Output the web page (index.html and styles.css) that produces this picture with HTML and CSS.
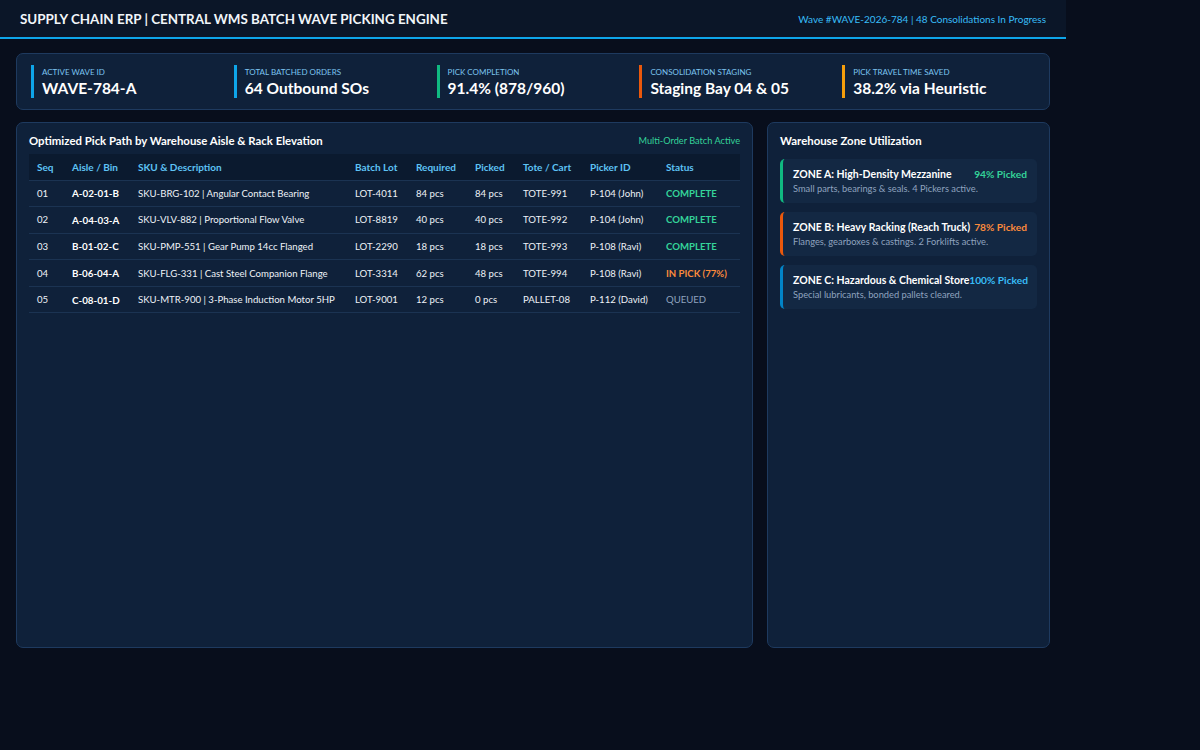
FILE: index.html
```html
<!DOCTYPE html>
<html lang="en">
<head>
  <meta charset="UTF-8">
  <meta name="viewport" content="width=device-width, initial-scale=1.0">
  <title>Central WMS Batch Wave Picking Engine</title>
  <link rel="stylesheet" href="styles.css">
</head>
<body>
  <div class="app">
    <header class="top-bar">
      <h1 class="app-title">Supply Chain ERP | Central WMS Batch Wave Picking Engine</h1>
      <div class="wave-meta">Wave #WAVE-2026-784 | 48 Consolidations In Progress</div>
    </header>

    <main class="content">
      <section class="stats-card">
        <div class="stat stat-blue">
          <span class="stat-label">Active Wave ID</span>
          <span class="stat-value">WAVE-784-A</span>
        </div>
        <div class="stat stat-blue">
          <span class="stat-label">Total Batched Orders</span>
          <span class="stat-value">64 Outbound SOs</span>
        </div>
        <div class="stat stat-green">
          <span class="stat-label">Pick Completion</span>
          <span class="stat-value">91.4% (878/960)</span>
        </div>
        <div class="stat stat-orange">
          <span class="stat-label">Consolidation Staging</span>
          <span class="stat-value">Staging Bay 04 &amp; 05</span>
        </div>
        <div class="stat stat-amber">
          <span class="stat-label">Pick Travel Time Saved</span>
          <span class="stat-value">38.2% via Heuristic</span>
        </div>
      </section>

      <div class="main-grid">
        <section class="panel">
          <div class="panel-header">
            <h2 class="panel-title">Optimized Pick Path by Warehouse Aisle &amp; Rack Elevation</h2>
            <span class="panel-tag">Multi-Order Batch Active</span>
          </div>
          <table class="pick-table">
            <colgroup>
              <col class="c-seq"><col class="c-aisle"><col class="c-sku"><col class="c-lot"><col class="c-req">
              <col class="c-picked"><col class="c-tote"><col class="c-picker"><col class="c-status">
            </colgroup>
            <thead>
              <tr>
                <th>Seq</th><th>Aisle / Bin</th><th>SKU &amp; Description</th><th>Batch Lot</th><th>Required</th>
                <th>Picked</th><th>Tote / Cart</th><th>Picker ID</th><th>Status</th>
              </tr>
            </thead>
            <tbody>
              <tr>
                <td>01</td><td class="bin">A-02-01-B</td><td>SKU-BRG-102 | Angular Contact Bearing</td><td>LOT-4011</td>
                <td>84 pcs</td><td>84 pcs</td><td>TOTE-991</td><td>P-104 (John)</td><td class="status done">COMPLETE</td>
              </tr>
              <tr>
                <td>02</td><td class="bin">A-04-03-A</td><td>SKU-VLV-882 | Proportional Flow Valve</td><td>LOT-8819</td>
                <td>40 pcs</td><td>40 pcs</td><td>TOTE-992</td><td>P-104 (John)</td><td class="status done">COMPLETE</td>
              </tr>
              <tr>
                <td>03</td><td class="bin">B-01-02-C</td><td>SKU-PMP-551 | Gear Pump 14cc Flanged</td><td>LOT-2290</td>
                <td>18 pcs</td><td>18 pcs</td><td>TOTE-993</td><td>P-108 (Ravi)</td><td class="status done">COMPLETE</td>
              </tr>
              <tr>
                <td>04</td><td class="bin">B-06-04-A</td><td>SKU-FLG-331 | Cast Steel Companion Flange</td><td>LOT-3314</td>
                <td>62 pcs</td><td>48 pcs</td><td>TOTE-994</td><td>P-108 (Ravi)</td><td class="status active">IN PICK (77%)</td>
              </tr>
              <tr>
                <td>05</td><td class="bin">C-08-01-D</td><td>SKU-MTR-900 | 3-Phase Induction Motor 5HP</td><td>LOT-9001</td>
                <td>12 pcs</td><td>0 pcs</td><td>PALLET-08</td><td>P-112 (David)</td><td class="status queued">QUEUED</td>
              </tr>
            </tbody>
          </table>
        </section>

        <aside class="panel">
          <div class="panel-header">
            <h2 class="panel-title">Warehouse Zone Utilization</h2>
          </div>
          <div class="zone-list">
            <div class="zone zone-green">
              <div class="zone-top">
                <span class="zone-name">ZONE A: High-Density Mezzanine</span>
                <span class="zone-pct">94% Picked</span>
              </div>
              <p class="zone-desc">Small parts, bearings &amp; seals. 4 Pickers active.</p>
            </div>
            <div class="zone zone-orange">
              <div class="zone-top">
                <span class="zone-name">ZONE B: Heavy Racking (Reach Truck)</span>
                <span class="zone-pct">78% Picked</span>
              </div>
              <p class="zone-desc">Flanges, gearboxes &amp; castings. 2 Forklifts active.</p>
            </div>
            <div class="zone zone-blue">
              <div class="zone-top">
                <span class="zone-name">ZONE C: Hazardous &amp; Chemical Store</span>
                <span class="zone-pct">100% Picked</span>
              </div>
              <p class="zone-desc">Special lubricants, bonded pallets cleared.</p>
            </div>
          </div>
        </aside>
      </div>
    </main>
  </div>
</body>
</html>
```

FILE: styles.css
```css
:root {
  --bg-page: #080e1c;
  --bg-header: #0b1628;
  --bg-panel: #0f213a;
  --bg-thead: #0b1a2f;
  --bg-zone: #132843;
  --border: #1e3a5f;
  --row-line: #1b3352;

  --accent: #0ea5e9;
  --text-primary: #f1f5f9;
  --text-body: #eef2f7;
  --text-muted: #8fa3bf;
  --text-label: #7cc4f0;
  --text-head: #5ec3f5;

  --green: #34d399;
  --orange: #fb8a3c;
  --blue: #38bdf8;

  --font-sans: "Segoe UI", Lato, sans-serif;
}

* {
  margin: 0;
  padding: 0;
  box-sizing: border-box;
}

body {
  font-family: var(--font-sans);
  background-color: var(--bg-page);
  color: var(--text-body);
}

.app {
  width: 1066px;
}

/* Header */
.top-bar {
  display: flex;
  justify-content: space-between;
  align-items: center;
  height: 39px;
  padding: 0 20px;
  background-color: var(--bg-header);
  border-bottom: 2px solid var(--accent);
}

.app-title {
  font-size: 13.4px;
  font-weight: 700;
  text-transform: uppercase;
  color: var(--text-primary);
}

.wave-meta {
  font-size: 10px;
  color: var(--blue);
}

.content {
  padding: 14px 16px;
}

/* Stats */
.stats-card {
  display: grid;
  grid-template-columns: repeat(5, 1fr);
  gap: 10px;
  padding: 11px 14px;
  background-color: var(--bg-panel);
  border: 1px solid var(--border);
  border-radius: 7px;
}

.stat {
  display: flex;
  flex-direction: column;
  gap: 2px;
  padding: 2px 0 1px 8px;
  border-left: 3px solid var(--accent);
}

.stat-green { border-left-color: #10b981; }
.stat-orange { border-left-color: #ea580c; }
.stat-amber { border-left-color: #f59e0b; }

.stat-label {
  font-size: 8px;
  text-transform: uppercase;
  color: var(--text-label);
}

.stat-value {
  font-size: 15.5px;
  font-weight: 700;
  color: #fff;
}

/* Panels */
.main-grid {
  display: grid;
  grid-template-columns: 1fr 283px;
  gap: 14px;
  margin-top: 12px;
}

.panel {
  height: 526px;
  padding: 9px 12px;
  background-color: var(--bg-panel);
  border: 1px solid var(--border);
  border-radius: 7px;
}

.panel-header {
  display: flex;
  justify-content: space-between;
  align-items: center;
  height: 16px;
  margin-bottom: 6px;
}

.panel-title {
  font-size: 11.4px;
  font-weight: 700;
  color: #fff;
}

.panel-tag {
  font-size: 9.2px;
  color: var(--green);
}

/* Table */
.pick-table {
  width: 100%;
  border-collapse: collapse;
  table-layout: fixed;
  font-size: 9.6px;
}

.c-seq { width: 35px; }
.c-aisle { width: 66px; }
.c-sku { width: 217px; }
.c-lot { width: 61px; }
.c-req { width: 59px; }
.c-picked { width: 48px; }
.c-tote { width: 67px; }
.c-picker { width: 76px; }

.pick-table th {
  height: 26px;
  padding: 0 8px;
  text-align: left;
  font-size: 10px;
  font-weight: 700;
  white-space: nowrap;
  color: var(--text-head);
  background-color: var(--bg-thead);
  border-bottom: 1px solid var(--row-line);
}

.pick-table td {
  height: 26.6px;
  padding: 0 8px;
  white-space: nowrap;
  color: var(--text-body);
  border-bottom: 1px solid var(--row-line);
}

.pick-table .bin {
  font-size: 9.8px;
  font-weight: 700;
  color: #fff;
}

.status { font-weight: 700; }
.status.done { color: var(--green); }
.status.active { color: var(--orange); }
.status.queued { color: var(--text-muted); font-weight: 400; }

/* Zones */
.zone-list {
  display: flex;
  flex-direction: column;
  gap: 9px;
  margin-top: 11px;
}

.zone {
  height: 44px;
  padding: 9px 10px 0 10px;
  background-color: var(--bg-zone);
  border-left: 3px solid #10b981;
  border-radius: 5px;
}

.zone-orange { border-left-color: #ea580c; }
.zone-blue { border-left-color: #0284c7; }

.zone-top {
  display: flex;
  justify-content: space-between;
  align-items: baseline;
  font-weight: 700;
}

.zone-name {
  font-size: 10.5px;
  color: #fff;
  white-space: nowrap;
}

.zone-pct {
  font-size: 10.2px;
  white-space: nowrap;
}

.zone-green .zone-pct { color: var(--green); }
.zone-orange .zone-pct { color: var(--orange); }
.zone-blue .zone-pct { color: var(--blue); }

.zone-desc {
  margin-top: 3px;
  font-size: 9.3px;
  color: var(--text-muted);
}
```
